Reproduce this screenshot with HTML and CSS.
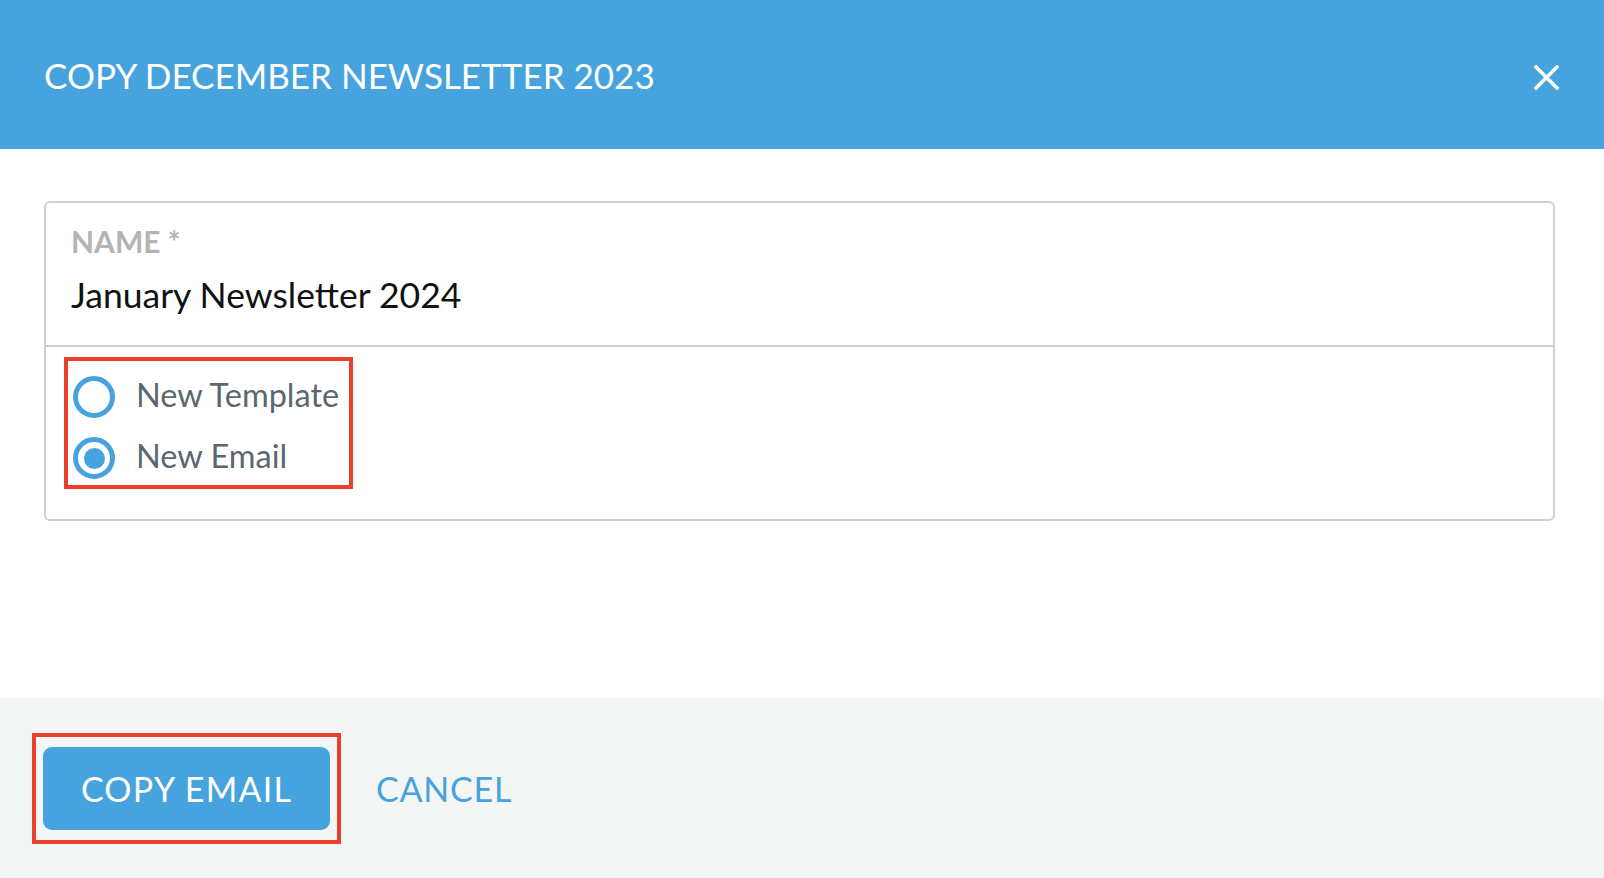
FILE: index.html
```html
<!DOCTYPE html>
<html lang="en">
<head>
<meta charset="utf-8">
<title>Copy December Newsletter 2023</title>
<link rel="stylesheet" href="styles.css">
</head>
<body>
<div class="dialog">
  <header class="dialog-header">
    <h1 class="dialog-title">COPY DECEMBER NEWSLETTER 2023</h1>
    <button class="close-btn" aria-label="Close">
      <svg width="25" height="25" viewBox="0 0 25 25"><path d="M2 2 L23 23 M23 2 L2 23" stroke="#fff" stroke-width="3.6" stroke-linecap="square"/></svg>
    </button>
  </header>
  <main class="dialog-body">
    <div class="field-box">
      <div class="name-field">
        <div class="field-label">NAME *</div>
        <div class="field-value">January Newsletter 2024</div>
      </div>
      <div class="options">
        <div class="highlight radio-group">
          <label class="radio-row"><span class="radio"></span><span class="radio-text">New Template</span></label>
          <label class="radio-row"><span class="radio checked"></span><span class="radio-text">New Email</span></label>
        </div>
      </div>
    </div>
  </main>
  <footer class="dialog-footer">
    <div class="highlight btn-wrap">
      <button class="btn-primary">COPY EMAIL</button>
    </div>
    <button class="btn-link">CANCEL</button>
  </footer>
</div>
</body>
</html>
```

FILE: styles.css
```css
* { box-sizing: border-box; }
html, body { margin: 0; padding: 0; }
body {
  font-family: "Lato", "Liberation Sans", sans-serif;
  background: #ffffff;
  width: 1604px;
  height: 878px;
  overflow: hidden;
}
.dialog {
  display: flex;
  flex-direction: column;
  height: 878px;
}
.dialog-header {
  height: 149px;
  background: #47a3de;
  display: flex;
  align-items: center;
  justify-content: space-between;
  padding: 0 45px 0 44px;
  flex-shrink: 0;
}
.dialog-title {
  margin: 0;
  color: #ffffff;
  font-weight: 400;
  font-size: 35px;
  line-height: 1;
  padding-top: 2px;
}
.close-btn {
  background: none;
  border: 0;
  padding: 0;
  margin-top: 6px;
  width: 25px;
  height: 25px;
  display: flex;
  cursor: pointer;
}
.dialog-body {
  flex: 1;
  padding: 52px 49px 0 44px;
}
.field-box {
  border: 2px solid #cfcfcf;
  border-radius: 6px;
  height: 320px;
}
.name-field {
  height: 144px;
  border-bottom: 2px solid #cfcfcf;
  padding: 20px 25px 0 25px;
}
.field-label {
  color: #b4b4b4;
  font-weight: 700;
  font-size: 30px;
  line-height: 36px;
}
.field-value {
  color: #111111;
  font-size: 35.5px;
  line-height: 44px;
  margin-top: 14px;
}
.options {
  padding: 10px 0 0 18px;
}
.highlight {
  border: 4.5px solid #e8402a;
}
.radio-group {
  display: inline-flex;
  flex-direction: column;
  gap: 19px;
  padding: 15px 10px 6px 5px;
}
.radio-row {
  display: flex;
  align-items: center;
  gap: 21px;
  height: 42px;
}
.radio {
  width: 42px;
  height: 42px;
  border-radius: 50%;
  border: 5px solid #47a3de;
  flex-shrink: 0;
  display: flex;
  align-items: center;
  justify-content: center;
}
.radio.checked::after {
  content: "";
  width: 21px;
  height: 21px;
  border-radius: 50%;
  background: #47a3de;
}
.radio-text {
  color: #5b6770;
  font-size: 32.5px;
  line-height: 42px;
  margin-top: -5px;
}
.dialog-footer {
  height: 180px;
  background: #f4f6f6;
  display: flex;
  align-items: flex-start;
  padding: 35px 0 0 32px;
  flex-shrink: 0;
}
.btn-wrap {
  padding: 10px 7px;
}
.btn-primary {
  width: 287px;
  height: 83px;
  border: 0;
  border-radius: 9px;
  background: #47a3de;
  color: #ffffff;
  font-family: "Lato", "Liberation Sans", sans-serif;
  font-size: 34px;
  letter-spacing: 1.2px;
  padding: 0;
  cursor: pointer;
}
.btn-link {
  background: none;
  border: 0;
  padding: 0;
  margin: 36px 0 0 35px;
  color: #47a3de;
  font-family: "Lato", "Liberation Sans", sans-serif;
  font-size: 34px;
  letter-spacing: 0.8px;
  line-height: 40px;
  cursor: pointer;
}
```
